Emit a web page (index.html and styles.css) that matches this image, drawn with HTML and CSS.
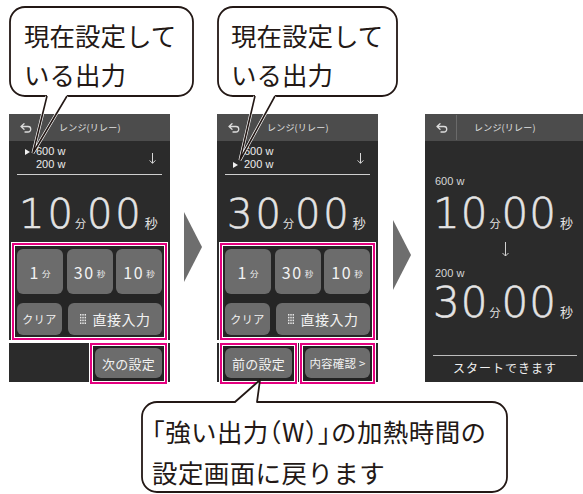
FILE: index.html
```html
<!DOCTYPE html>
<html lang="ja">
<head>
<meta charset="utf-8">
<title>レンジ(リレー)</title>
<link rel="stylesheet" href="styles.css">
</head>
<body>
<div class="stage">
  <div class="row">
    <section class="screen">
      <div class="upper">
        <header class="hdr">
          <svg class="back" viewBox="0 0 13 10"><path d="M4 0.8 L1 3.5 L4 6.2 M1 3.5 H8 A2.75 2.75 0 0 1 8 9 H5"/></svg>
          <span class="title">レンジ(リレー)</span>
        </header>
        <div class="info">
          <div class="lines">
            <div class="ln"><span class="mk on"></span>600 w</div>
            <div class="ln"><span class="mk"></span>200 w</div>
          </div>
          <svg class="darr" viewBox="0 0 7 11"><path d="M3.5 0 V10.3 M0.6 7.4 L3.5 10.3 L6.4 7.4"/></svg>
        </div>
        <div class="time"><span class="num">10</span><span class="u1">分</span><span class="num">00</span><span class="u2">秒</span></div>
        <div class="keys hl">
          <div class="krow">
            <div class="key"><span class="n">1</span><span class="s">分</span></div>
            <div class="key"><span class="n">30</span><span class="s">秒</span></div>
            <div class="key"><span class="n">10</span><span class="s">秒</span></div>
          </div>
          <div class="krow2">
            <div class="key clr">クリア</div>
            <div class="key direct"><svg class="pad" viewBox="0 0 6 10"><g><rect x="0" y="0" width="1.4" height="1.6"/><rect x="2.3" y="0" width="1.4" height="1.6"/><rect x="4.6" y="0" width="1.4" height="1.6"/><rect x="0" y="2.8" width="1.4" height="1.6"/><rect x="2.3" y="2.8" width="1.4" height="1.6"/><rect x="4.6" y="2.8" width="1.4" height="1.6"/><rect x="0" y="5.6" width="1.4" height="1.6"/><rect x="2.3" y="5.6" width="1.4" height="1.6"/><rect x="4.6" y="5.6" width="1.4" height="1.6"/><rect x="0" y="8.4" width="1.4" height="1.6"/><rect x="2.3" y="8.4" width="1.4" height="1.6"/><rect x="4.6" y="8.4" width="1.4" height="1.6"/></g></svg>直接入力</div>
          </div>
        </div>
      </div>
      <div class="lower end">
        <div class="hl nav w77"><div class="key navbtn">次の設定</div></div>
      </div>
    </section>

    <div class="chev c1"></div>

    <section class="screen">
      <div class="upper">
        <header class="hdr">
          <svg class="back" viewBox="0 0 13 10"><path d="M4 0.8 L1 3.5 L4 6.2 M1 3.5 H8 A2.75 2.75 0 0 1 8 9 H5"/></svg>
          <span class="title">レンジ(リレー)</span>
        </header>
        <div class="info">
          <div class="lines">
            <div class="ln"><span class="mk"></span>600 w</div>
            <div class="ln"><span class="mk on"></span>200 w</div>
          </div>
          <svg class="darr" viewBox="0 0 7 11"><path d="M3.5 0 V10.3 M0.6 7.4 L3.5 10.3 L6.4 7.4"/></svg>
        </div>
        <div class="time"><span class="num">30</span><span class="u1">分</span><span class="num">00</span><span class="u2">秒</span></div>
        <div class="keys hl">
          <div class="krow">
            <div class="key"><span class="n">1</span><span class="s">分</span></div>
            <div class="key"><span class="n">30</span><span class="s">秒</span></div>
            <div class="key"><span class="n">10</span><span class="s">秒</span></div>
          </div>
          <div class="krow2">
            <div class="key clr">クリア</div>
            <div class="key direct"><svg class="pad" viewBox="0 0 6 10"><g><rect x="0" y="0" width="1.4" height="1.6"/><rect x="2.3" y="0" width="1.4" height="1.6"/><rect x="4.6" y="0" width="1.4" height="1.6"/><rect x="0" y="2.8" width="1.4" height="1.6"/><rect x="2.3" y="2.8" width="1.4" height="1.6"/><rect x="4.6" y="2.8" width="1.4" height="1.6"/><rect x="0" y="5.6" width="1.4" height="1.6"/><rect x="2.3" y="5.6" width="1.4" height="1.6"/><rect x="4.6" y="5.6" width="1.4" height="1.6"/><rect x="0" y="8.4" width="1.4" height="1.6"/><rect x="2.3" y="8.4" width="1.4" height="1.6"/><rect x="4.6" y="8.4" width="1.4" height="1.6"/></g></svg>直接入力</div>
          </div>
        </div>
      </div>
      <div class="lower split">
        <div class="hl nav w77"><div class="key navbtn">前の設定</div></div>
        <div class="hl nav w75"><div class="key navbtn sm">内容確認 &gt;</div></div>
      </div>
    </section>

    <div class="chev c2"></div>

    <section class="screen wide">
      <div class="upper full">
        <header class="hdr">
          <svg class="back" viewBox="0 0 13 10"><path d="M4 0.8 L1 3.5 L4 6.2 M1 3.5 H8 A2.75 2.75 0 0 1 8 9 H5"/></svg>
          <span class="sep"></span>
          <span class="title t3">レンジ(リレー)</span>
        </header>
        <div class="summary">
          <div class="lbl l1">600 w</div>
          <div class="time big t1"><span class="num">10</span><span class="u1">分</span><span class="num">00</span><span class="u2">秒</span></div>
          <svg class="darr2" viewBox="0 0 7 15"><path d="M3.5 0 V14 M0.5 11 L3.5 14 L6.5 11"/></svg>
          <div class="lbl l2">200 w</div>
          <div class="time big t2"><span class="num">30</span><span class="u1">分</span><span class="num">00</span><span class="u2">秒</span></div>
        </div>
        <div class="ready">スタートできます</div>
      </div>
    </section>
  </div>

  <svg class="bubbles" viewBox="0 0 583 494">
    <path class="bb" d="M67 96 H178 A15 15 0 0 0 193 81 V22 A15 15 0 0 0 178 7 H25 A15 15 0 0 0 10 22 V81 A15 15 0 0 0 25 96 H47"/>
    <path class="halo" d="M47 96 L33 153 L67 96"/>
    <path class="tail" d="M47 96 L33 153 L67 96"/>
    <path class="bb" d="M275 96 H382 A15 15 0 0 0 397 81 V22 A15 15 0 0 0 382 7 H233 A15 15 0 0 0 218 22 V81 A15 15 0 0 0 233 96 H255"/>
    <path class="halo" d="M255 96 L240 160 L275 96"/>
    <path class="tail" d="M255 96 L240 160 L275 96"/>
    <path class="bb" d="M257 402 H492 A15 15 0 0 1 507 417 V477 A15 15 0 0 1 492 492 H157 A15 15 0 0 1 142 477 V417 A15 15 0 0 1 157 402 H235 L260 380 Z"/>
  </svg>
  <div class="btext b1">現在設定して<br>いる出力</div>
  <div class="btext b2">現在設定して<br>いる出力</div>
  <div class="btext b3"><span class="hp">「</span>強い出力<span class="hp">（</span>W<span class="hp">）」</span>の加熱時間の<br>設定画面に戻ります</div>
</div>
</body>
</html>
```
FILE: styles.css
```css
* { box-sizing: border-box; margin: 0; padding: 0; }
html, body { background: #fff; }
body {
  width: 583px; height: 494px; overflow: hidden;
  font-family: "Noto Sans CJK JP", "Noto Sans", sans-serif;
}
.stage { position: relative; width: 583px; height: 494px; }
.row { display: flex; align-items: flex-start; padding: 114px 0 0 9px; }

.screen { width: 161px; display: flex; flex-direction: column; flex: none; }
.screen.wide { width: 158px; }
.upper { background: #2b2b2b; display: flex; flex-direction: column; }
.upper.full { height: 268px; }

.hdr { height: 27px; background: #4c4c4c; display: flex; align-items: center; color: #e2e2e2; flex: none; }
.back { width: 13px; height: 10px; margin-left: 11px; fill: none; stroke: #dcdcdc; stroke-width: 1.3; stroke-linecap: round; stroke-linejoin: round; }
.title { font-size: 9px; margin-left: 26px; letter-spacing: 0.2px; }
.sep { width: 1px; height: 25px; background: #6a6a6a; margin-left: 7px; }
.t3 { margin-left: 17px; }

.info {
  display: flex; align-items: center; margin: 0 8px; padding: 4px 0 3px;
  border-bottom: 1px solid #cfcfcf; color: #ececec;
  font-family: "Liberation Sans", Arial, sans-serif; font-size: 11px; line-height: 13px;
}
.lines { flex: 1; }
.ln { display: flex; align-items: center; height: 13px; }
.mk { display: inline-block; width: 19px; height: 13px; position: relative; }
.mk.on::before {
  content: ""; position: absolute; left: 8px; top: 3.5px;
  border-left: 5.5px solid #f0f0f0; border-top: 3.5px solid transparent; border-bottom: 3.5px solid transparent;
}
.darr { width: 7px; height: 11px; margin-right: 6px; fill: none; stroke: #d8d8d8; stroke-width: 1; }

.time {
  display: flex; align-items: baseline; color: #e4e4e4;
  line-height: 40px; height: 40px;
  margin-top: 19px; padding-left: 10px;
}
.time .num {
  font-family: "DejaVu Sans", sans-serif; font-weight: 200; font-size: 40px;
  letter-spacing: 3px; margin-right: -3px; -webkit-text-stroke: 0.6px #e4e4e4;
}
.time .u1 { font-size: 11px; margin: 0 1px 0 2px; }
.time .u2 { font-size: 13px; margin-left: 4px; }

.hl { border: 2px solid #e4007f; box-shadow: inset 0 0 0 1px #fff, 0 0 0 1px #fff; }
.keys { margin: 9px 3px 0; padding: 4px 3px 3px; background: #252525; }
.krow { display: grid; grid-template-columns: repeat(3, 1fr); gap: 3.5px; height: 45px; }
.krow2 { display: flex; gap: 6px; height: 32px; margin-top: 9px; }
.key {
  background: #6c6c6c; border-radius: 6px; color: #f2f2f2;
  display: flex; align-items: center; justify-content: center;
}
.key .n { font-size: 16px; font-weight: 400; letter-spacing: 1.5px; }
.key .s { font-size: 8.5px; margin-left: 2px; margin-top: 3px; }
.clr { width: 45px; font-size: 11px; letter-spacing: 0.5px; }
.direct { flex: 1; font-size: 14px; font-weight: 400; letter-spacing: 0.5px; }
.pad { width: 6px; height: 10px; margin-right: 7px; fill: #e8e8e8; }

.lower { margin-top: 3px; height: 39px; background: #2b2b2b; display: flex; gap: 3px; }
.lower.end { justify-content: flex-end; padding-right: 3px; }
.lower.split { padding-left: 3px; }
.nav { height: 41px; padding: 3px 3px 4px 3px; background: #222; flex: none; }
.w77 { width: 77px; }
.w75 { width: 75px; }
.navbtn { height: 100%; font-size: 13px; letter-spacing: 0.3px; }
.navbtn.sm { font-size: 11.5px; letter-spacing: 0.2px; }

.chev { flex: none; width: 18px; height: 70px; background: #6e6e6e; clip-path: polygon(0 0, 100% 50%, 0 100%); }
.c1 { margin: 98px 15px 0 14px; }
.c2 { margin: 106px 14px 0 15px; }

.summary { display: flex; flex-direction: column; padding-left: 8px; color: #e4e4e4; }
.lbl { font-family: "Liberation Sans", Arial, sans-serif; font-size: 11px; line-height: 11px; height: 11px; color: #d6d6d6; padding-left: 2px; }
.l1 { margin-top: 35px; }
.time.big { padding-left: 0; line-height: 42px; height: 42px; }
.time.big .num { font-size: 42px; letter-spacing: 1px; margin-right: -1px; }
.t1 { margin-top: 5.5px; }
.darr2 { width: 7px; height: 15px; margin: 7.5px 0 0 69px; fill: none; stroke: #d0d0d0; stroke-width: 1; }
.l2 { margin-top: 10.5px; }
.t2 { margin-top: 3px; }
.ready {
  margin: auto 6px 0 8px; border-top: 1px solid #bdbdbd;
  padding: 4px 0 6px; text-align: center; font-size: 12px; line-height: 16px;
  color: #f0f0f0; letter-spacing: 1px;
}

.bubbles { position: absolute; left: 0; top: 0; width: 583px; height: 494px; }
.bb { fill: #fff; stroke: #231815; stroke-width: 1.8; stroke-linejoin: round; }
.tail { fill: none; stroke: #231815; stroke-width: 1.6; stroke-linejoin: miter; }
.halo { fill: none; stroke: #fff; stroke-width: 3; }

.btext { position: absolute; color: #231815; font-size: 25.5px; line-height: 39px; white-space: nowrap; }
.b1 { left: 24px; top: 15px; }
.b2 { left: 231px; top: 15px; }
.b3 { left: 152px; top: 410px; line-height: 41px; letter-spacing: 0.4px; }
.hp { font-feature-settings: "halt"; }
```
